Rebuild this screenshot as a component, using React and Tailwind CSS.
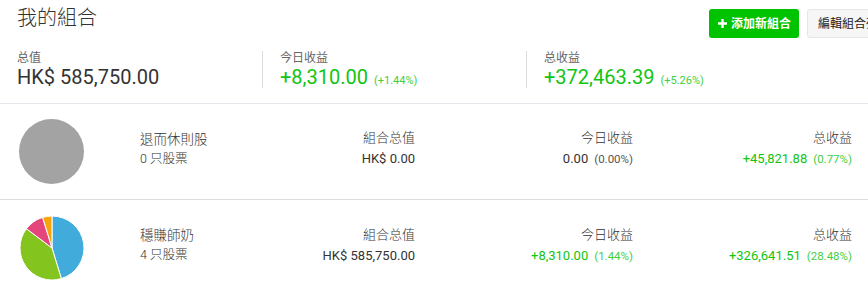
import React from "react";

const green = "text-[#11c511]";

function Pie({ slices }) {
  let acc = 0;
  const r = 32;
  const cx = 33;
  const cy = 33;
  const pt = (a) => {
    const rad = ((a - 90) * Math.PI) / 180;
    return [cx + r * Math.cos(rad), cy + r * Math.sin(rad)];
  };
  return (
    <svg width="66" height="66" viewBox="0 0 66 66">
      {slices.map((s, i) => {
        const start = acc;
        acc += s.deg;
        const [x1, y1] = pt(start);
        const [x2, y2] = pt(acc);
        const large = s.deg > 180 ? 1 : 0;
        return (
          <path
            key={i}
            d={`M${cx} ${cy} L${x1} ${y1} A${r} ${r} 0 ${large} 1 ${x2} ${y2} Z`}
            fill={s.color}
            stroke="#fff"
            strokeWidth="1"
          />
        );
      })}
    </svg>
  );
}

function Stat({ label, value, pct, color }) {
  return (
    <div className="text-right">
      <div className="text-[13px] text-[#333] leading-[18px] font-light">{label}</div>
      <div className="mt-[2px] leading-[18px]">
        <span className={`text-[13px] ${color}`}>{value}</span>
        {pct && (
          <span className={`ml-[6px] text-[11.5px] ${color === green ? "text-[#3fcf3f]" : "text-[#555]"}`}>
            {pct}
          </span>
        )}
      </div>
    </div>
  );
}

function Row({ icon, name, count, total, today, todayPct, todayColor, gain, gainPct, last }) {
  return (
    <div className={`flex items-center h-[96px] ${last ? "" : "border-b border-[#dddddd]"}`}>
      <div className="w-[140px] pl-[19px]">{icon}</div>
      <div className="w-[140px] text-[#333] mb-[6px] font-light">
        <div className="text-[13.5px] leading-[18px]">{name}</div>
        <div className="text-[12.5px] leading-[18px] mt-[2px]">{count}</div>
      </div>
      <div className="w-[135px] flex justify-end mb-[6px]">
        <Stat label="組合总值" value={total} color="text-[#333]" />
      </div>
      <div className="w-[218px] flex justify-end mb-[6px]">
        <Stat label="今日收益" value={today} pct={todayPct} color={todayColor} />
      </div>
      <div className="w-[219px] flex justify-end mb-[6px]">
        <Stat label="总收益" value={gain} pct={gainPct} color={green} />
      </div>
    </div>
  );
}

export default function App() {
  return (
    <div
      className="w-[868px] h-[297px] overflow-hidden bg-white text-[#333]"
      style={{ fontFamily: 'Roboto, "Noto Sans CJK TC", sans-serif' }}
    >
      <div className="flex items-start h-[48px] overflow-hidden">
        <h1 className="w-[709px] shrink-0 pl-[17px] pt-[5px] text-[20px] font-light text-[#333] leading-[26px]">我的組合</h1>
        <div className="flex gap-2 pt-[9px] whitespace-nowrap shrink-0">
          <button className="h-[29px] w-[90px] rounded-[3px] bg-[#00c300] text-white text-[12px] font-bold flex items-center justify-center gap-[3px]">
            <svg width="11" height="11" viewBox="0 0 11 11">
              <path d="M5.5 1v9M1 5.5h9" stroke="#fff" strokeWidth="2.4" />
            </svg>
            添加新組合
          </button>
          <button className="h-[29px] px-[10px] rounded-[3px] bg-[#f6f6f6] border border-[#e6e6e6] text-[#222] text-[12px]">
            編輯組合列表
          </button>
        </div>
      </div>

      <div className="flex h-[56px] pt-[3px] border-b border-[#e3e6ea]">
        <div className="w-[262px] pl-[17px] h-[37px]">
          <div className="text-[12px] text-[#666] leading-[14px]">总值</div>
          <div className="text-[20px] leading-[24px] text-[#333]">HK$ 585,750.00</div>
        </div>
        <div className="w-[264px] pl-[17px] h-[37px] border-l border-[#dddddd]">
          <div className="text-[12px] text-[#666] leading-[14px]">今日收益</div>
          <div className="leading-[24px]">
            <span className={`text-[20px] ${green}`}>+8,310.00</span>
            <span className="ml-[6px] text-[11px] text-[#3fcf3f]">(+1.44%)</span>
          </div>
        </div>
        <div className="flex-1 pl-[17px] h-[37px] border-l border-[#dddddd]">
          <div className="text-[12px] text-[#666] leading-[14px]">总收益</div>
          <div className="leading-[24px]">
            <span className={`text-[20px] ${green}`}>+372,463.39</span>
            <span className="ml-[6px] text-[11px] text-[#3fcf3f]">(+5.26%)</span>
          </div>
        </div>
      </div>

      <Row
        icon={<div className="w-[65px] h-[65px] rounded-full bg-[#a3a3a3]" />}
        name="退而休則股"
        count="0 只股票"
        total="HK$ 0.00"
        today="0.00"
        todayPct="(0.00%)"
        todayColor="text-[#333]"
        gain="+45,821.88"
        gainPct="(0.77%)"
      />
      <Row
        icon={
          <Pie
            slices={[
              { deg: 163, color: "#41abdc" },
              { deg: 144, color: "#84c41e" },
              { deg: 36, color: "#e4457a" },
              { deg: 17, color: "#f7a30c" },
            ]}
          />
        }
        name="穩賺師奶"
        count="4 只股票"
        total="HK$ 585,750.00"
        today="+8,310.00"
        todayPct="(1.44%)"
        todayColor={green}
        gain="+326,641.51"
        gainPct="(28.48%)"
        last
      />
    </div>
  );
}
